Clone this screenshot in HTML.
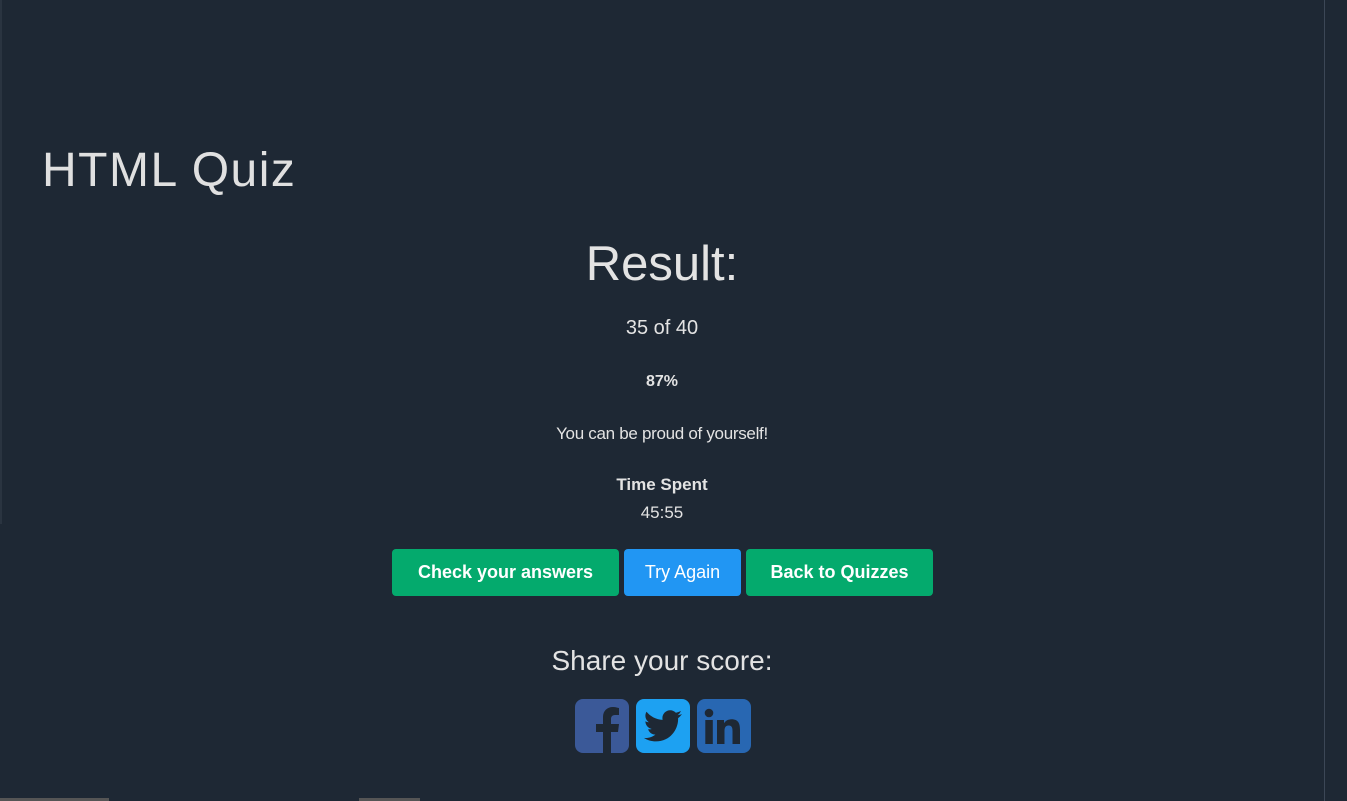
<!DOCTYPE html>
<html><head><style>
body{margin:0;width:1347px;height:801px;background:#1e2834;color:#e3e3e3;font-family:"Liberation Sans",sans-serif;position:relative;overflow:hidden}
.a{position:absolute;white-space:nowrap}
.c{left:0;width:1324px;text-align:center}
.btn{position:absolute;top:549px;height:47px;border-radius:4px;color:#fff;font-size:18px;line-height:47px;text-align:center}
</style></head><body>
<div class="a" style="left:1324px;top:0;width:1px;height:801px;background:#3c4756"></div>
<div class="a" style="left:0;top:0;width:2px;height:524px;background:#2a3440"></div>
<div class="a" style="left:0;top:798px;width:109px;height:3px;background:#555"></div>
<div class="a" style="left:359px;top:798px;width:61px;height:3px;background:#555"></div>
<div class="a" style="left:42px;top:143px;font-size:48px;color:#e0e0e0;letter-spacing:1.5px">HTML Quiz</div>
<div class="a c" style="top:236px;font-size:49px">Result:</div>
<div class="a c" style="top:317px;font-size:20px">35 of 40</div>
<div class="a c" style="top:373px;font-size:16px;font-weight:bold">87%</div>
<div class="a c" style="top:424px;font-size:17px;letter-spacing:-0.3px">You can be proud of yourself!</div>
<div class="a c" style="top:475px;font-size:17px;font-weight:bold">Time Spent</div>
<div class="a c" style="top:503px;font-size:17px">45:55</div>
<div class="btn" style="left:392px;width:227px;background:#04aa6d;font-weight:bold">Check your answers</div>
<div class="btn" style="left:624px;width:117px;background:#2196f3">Try Again</div>
<div class="btn" style="left:746px;width:187px;background:#04aa6d;font-weight:bold">Back to Quizzes</div>
<div class="a c" style="top:645px;font-size:28px">Share your score:</div>
<svg class="a" style="left:575px;top:699px" width="178" height="55">
<rect x="0" y="0" width="54" height="54" rx="8" fill="#3b5998"/>
<path d="M36 54V33h7l1-8h-8v-5c0-2 1-4 4-4h4V9c-1 0-3-1-6-1-6 0-10 4-10 10v7h-7v8h7v21z" fill="#1e2834"/>
<rect x="61" y="0" width="54" height="54" rx="8" fill="#1da1f2"/>
<path d="M107 15c-1.5.7-3 1-4.5 1.2 1.6-1 2.8-2.5 3.4-4.3-1.5.9-3.2 1.5-5 1.9-1.4-1.5-3.5-2.5-5.7-2.5-4.3 0-7.8 3.5-7.8 7.8 0 .6.1 1.2.2 1.8-6.5-.3-12.2-3.4-16.1-8.1-.7 1.2-1.1 2.5-1.1 3.9 0 2.7 1.4 5.1 3.5 6.5-1.3 0-2.5-.4-3.5-1v.1c0 3.8 2.7 6.9 6.3 7.7-.7.2-1.3.3-2.1.3-.5 0-1 0-1.5-.1 1 3.1 3.9 5.4 7.3 5.4-2.7 2.1-6.1 3.4-9.7 3.4-.6 0-1.3 0-1.9-.1 3.5 2.2 7.6 3.5 12 3.5 14.4 0 22.3-11.9 22.3-22.3v-1c1.5-1.1 2.8-2.5 3.9-4.1z" fill="#1e2834"/>
<rect x="122" y="0" width="54" height="54" rx="8" fill="#2867b2"/>
<circle cx="134" cy="14" r="4.3" fill="#1e2834"/>
<rect x="130.3" y="21" width="7.5" height="24" fill="#1e2834"/>
<path d="M142 21h7v3.3c1.3-2.2 4-4 7.5-4 7 0 8.5 4.6 8.5 10.6V45h-7.5V32.5c0-3-.2-6-3.8-6s-4.2 2.8-4.2 5.8V45H142z" fill="#1e2834"/>
</svg>
</body></html>
